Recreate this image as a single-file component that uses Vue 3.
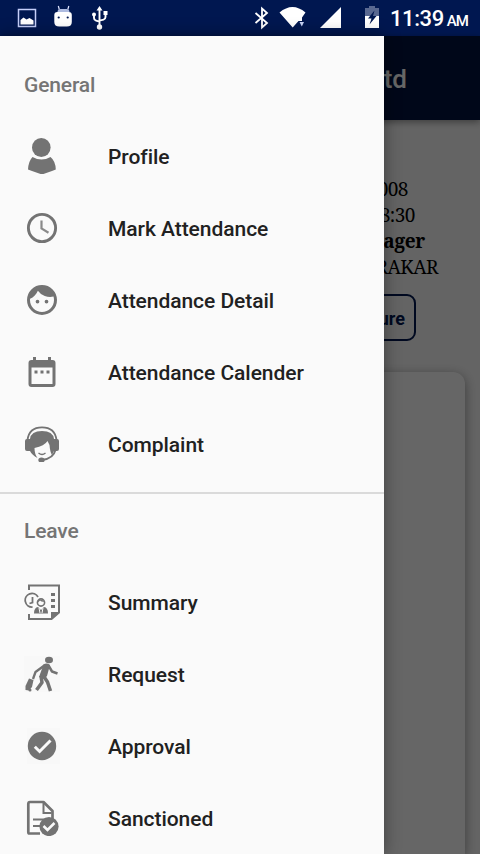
<script setup>
const sections = [
  {
    title: 'General',
    items: [
      { label: 'Profile', icon: 'profile' },
      { label: 'Mark Attendance', icon: 'clock' },
      { label: 'Attendance Detail', icon: 'face' },
      { label: 'Attendance Calender', icon: 'calendar' },
      { label: 'Complaint', icon: 'support' },
    ],
  },
  {
    title: 'Leave',
    items: [
      { label: 'Summary', icon: 'summary' },
      { label: 'Request', icon: 'request' },
      { label: 'Approval', icon: 'approval' },
      { label: 'Sanctioned', icon: 'sanctioned' },
    ],
  },
]
</script>

<template>
  <div class="screen">
    <header class="status">
      <svg class="status-icons" width="120" height="36" viewBox="0 0 120 36">
        <rect x="18.5" y="9.5" width="17" height="17" fill="none" stroke="#c5cffa" stroke-width="1.5" />
        <path d="M20.5 24.500V20l3-2.500 3 2 3-1.500 4 2.500v4z" fill="#fff" />
        <path d="M58.300 6l1 3.500M68.800 6l-1 3.500" stroke="#dfe5ff" stroke-width="1.200" />
        <path d="M57.500 12q0-3 3-3h6q3 0 3 3z" fill="#aebbe0" />
        <path d="M54.300 15q0-3 3-3h11.500q3 0 3 3v7q0 4.500-5 4.500h-7.500q-5 0-5-4.500z" fill="#fff" />
        <circle cx="58.700" cy="17.500" r="1.100" fill="#001750" /><circle cx="67.700" cy="17.500" r="1.100" fill="#001750" />
        <g fill="none" stroke="#fff" stroke-width="1.900"><path d="M99.500 9v17M94 15v3q0 2 2 2.600l3.500 1M105.500 14v3q0 2-2 2.600l-4 1" /></g>
        <path d="M99.500 6l3 4.500h-6zM103.500 11h4v4h-4z" fill="#fff" /><circle cx="94" cy="14.500" r="2" fill="#fff" /><circle cx="99.500" cy="27" r="2.700" fill="#fff" />
      </svg>
      <div class="status-right">
        <svg width="130" height="36" viewBox="250 0 130 36">
          <path d="M255.500 13l11.500 10-5 4.500V8.500l5 4.500-11.500 10" fill="none" stroke="#fff" stroke-width="1.800" />
          <path d="M279.500 12.500Q292.500 1.500 305.500 12.500L302 17.500V21h-3.500L292.700 27.500z" fill="#fff" />
          <path d="M299.500 22h4.500l-2.200 4.500z" fill="#c6d3f5" />
          <path d="M341 7v21h-21z" fill="#fff" />
          <path d="M369 6h6v2h4v9h-14V8h4z" fill="#596890" /><path d="M365 16h14v12h-14z" fill="#fff" />
          <path d="M374.500 10.500l-6.500 8h3.500l-2 6 7-8.500h-3.500z" fill="#001750" />
        </svg>
        <span class="time">11:39</span><span class="ampm">AM</span>
      </div>
    </header>

    <div class="body">
      <main class="page">
        <div class="toolbar">Ltd</div>
        <div class="details">
          <div class="line id">008</div>
          <div class="line hours">8:30</div>
          <div class="line role">nager</div>
          <div class="line name">RAKAR</div>
        </div>
        <div class="button">ure</div>
        <div class="card"></div>
      </main>
      <div class="scrim"></div>

      <nav class="drawer">
        <section v-for="section in sections" :key="section.title" class="section">
          <h2>{{ section.title }}</h2>
          <div v-for="item in section.items" :key="item.label" class="item">
            <svg class="icon" viewBox="0 0 36 36" fill="#737373">
              <template v-if="item.icon === 'profile'">
                <ellipse cx="17.300" cy="9.500" rx="9.300" ry="9.500" />
                <path d="M8.500 19Q17.500 24 26.500 19Q31.500 23 31.800 31.500L28 33 18 36.500 8 33 4 31.500Q4.500 23 8.500 19z" />
              </template>
              <template v-else-if="item.icon === 'clock'">
                <circle cx="18" cy="18" r="13.600" fill="none" stroke="#737373" stroke-width="2.900" />
                <path d="M17.500 10.500v8l7 4.200" fill="none" stroke="#8a8a8a" stroke-width="2.200" />
              </template>
              <g v-else-if="item.icon === 'face'" transform="scale(1.5)">
                <path d="M9 11.750a1.250 1.250 0 1 0 0 2.500 1.250 1.250 0 0 0 0-2.500zm6 0a1.250 1.250 0 1 0 0 2.500 1.250 1.250 0 0 0 0-2.500zM12 2a10 10 0 1 0 0 20 10 10 0 0 0 0-20zm0 18c-4.410 0-8-3.590-8-8 0-.290.020-.580.050-.860 2.360-1.050 4.230-2.980 5.210-5.370a9.974 9.974 0 0 0 10.410 3.970c.210.710.330 1.470.330 2.260 0 4.410-3.590 8-8 8z" />
              </g>
              <g v-else-if="item.icon === 'calendar'" transform="scale(1.5)">
                <path fill-rule="evenodd" d="M19 4h-1V2h-2v2H8V2H6v2H5a2 2 0 0 0-1.990 2L3 20a2 2 0 0 0 2 2h14a2 2 0 0 0 2-2V6a2 2 0 0 0-2-2zm0 16H5V9h14v11z" />
                <path d="M7 11h2v2H7zm4 0h2v2h-2zm4 0h2v2h-2z" />
              </g>
              <template v-else-if="item.icon === 'support'">
                <path d="M3.500 14Q5 1.300 18 1.300T32.500 14" fill="none" stroke="#737373" stroke-width="1.800" />
                <path d="M3 13h3q1-8 12-8t12 8h3q2 0 2 2v8q0 2-2 2h-3l-2 4q-2-3-2.500-10l-2-4q-3 5-13 7 0 6 3 10Q8 29 6 25H3q-2 0-2-2v-8q0-2 2-2z" />
                <path d="M14.500 27q3.500 3 7 0" fill="none" stroke="#737373" stroke-width="1.300" />
                <path d="M31.500 24q-2 8.500-13.500 10" fill="none" stroke="#737373" stroke-width="1.800" /><ellipse cx="17.500" cy="34" rx="3.200" ry="2.500" />
              </template>
              <template v-else-if="item.icon === 'summary'">
                <path d="M5 6V1.500h30v27L27.500 35H5v-5" fill="none" stroke="#737373" stroke-width="2" />
                <path d="M27 36v-8h9zM27 9h4v3h-4zm0 6h4v3h-4zm0 6h4v3h-4z" />
                <path d="M8.500 23A6.800 6.800 0 1 1 14 13M8.500 13v5.500l-3 1" fill="none" stroke="#737373" stroke-width="1.800" />
                <circle cx="17" cy="18.500" r="3.600" fill="none" stroke="#737373" stroke-width="1.600" />
                <path d="M13 17.500q2-4 8 0-3 1-5-1l-3 3zM10 29.500q0-6 4-6.500l3 3 3-3q4 .500 4 6.500z" />
                <path d="M15 24l1 5M19 24l-1 5" stroke="#fafafa" />
              </template>
              <template v-else-if="item.icon === 'request'">
                <rect width="36" height="36" fill="#f8f8f8" />
                <ellipse cx="25" cy="4" rx="4" ry="3.300" />
                <path d="M19.500 8.500Q23 6.500 26 9l-3 11-3 3-5-2z" />
                <g fill="none" stroke="#737373" stroke-linejoin="round">
                  <path d="M21 9l-9.500 7-2.500 7" stroke-width="2.300" />
                  <path d="M24.500 9.500l3.500 6 5.500 2" stroke-width="2.500" />
                  <path d="M19.500 20l4 6 3 9" stroke-width="3.500" />
                  <path d="M17 20l1 6.500-5.500 7.500" stroke-width="3.500" />
                </g>
                <path d="M5 22.500l4.500 1.500-1.500 7-3 3.500-3.500-.500v-4z" /><circle cx="6" cy="34" r="1.500" />
              </template>
              <template v-else-if="item.icon === 'approval'">
                <rect x="3" width="33" height="36" fill="#f8f8f8" />
                <circle cx="18" cy="18" r="14.200" />
                <path d="M10.800 18.800l4.800 4.700L26.500 12.500" fill="none" stroke="#fafafa" stroke-width="3" />
              </template>
              <template v-else>
                <path d="M16 33.500H5.500Q4.300 33.500 4.300 32V4Q4.300 2 6 2h13.500l9 9v8" fill="none" stroke="#737373" stroke-width="2.700" stroke-linejoin="round" />
                <path d="M19.500 3v10h8" fill="none" stroke="#737373" stroke-width="2" />
                <path d="M9 19.500h14M9 26h8" stroke="#737373" stroke-width="2" />
                <circle cx="25" cy="26.500" r="9.600" />
                <path d="M19.500 26l4 4 7-7" fill="none" stroke="#fafafa" stroke-width="2.500" />
              </template>
            </svg>
            <span>{{ item.label }}</span>
          </div>
        </section>
      </nav>
    </div>
  </div>
</template>

<style>
body { overflow: hidden; }
</style>

<style scoped>
.screen {
  width: 480px;
  height: 854px;
  overflow: hidden;
  display: flex;
  flex-direction: column;
  font-family: Roboto, "Liberation Sans", sans-serif;
}
.status {
  height: 36px;
  flex: none;
  display: flex;
  justify-content: space-between;
  background: #001750;
  color: #fff;
}
.status svg { display: block; }
.status-right {
  display: flex;
  align-items: baseline;
  width: 230px;
}
.status-right svg { align-self: flex-start; flex: none; }
.time { font-size: 22px; line-height: 38px; font-weight: 500; margin-left: 10px; letter-spacing: -0.4px; }
.ampm { font-size: 15px; margin-left: 3px; font-weight: 500; letter-spacing: -0.9px; }
.body { position: relative; flex: 1; min-height: 0; }
.page {
  height: 100%;
  display: flex;
  flex-direction: column;
  align-items: flex-end;
  background: #fafafa;
}
.toolbar {
  width: 100%;
  height: 84px;
  flex: none;
  box-sizing: border-box;
  padding-right: 73px;
  text-align: right;
  line-height: 86px;
  font-size: 26px;
  font-weight: 500;
  color: #fff;
  background: #001340;
  box-shadow: 0 2px 7px rgba(0, 0, 0, 0.4);
}
.details {
  padding-top: 56px;
  display: flex;
  flex-direction: column;
  align-items: flex-end;
  color: #000;
  font-family: "Noto Serif", "Liberation Serif", serif;
  font-size: 19px;
  line-height: 26px;
  letter-spacing: -0.5px;
}
.id { margin-right: 72px; }
.hours { margin-right: 65px; }
.role { margin-right: 55px; font-weight: 700; line-height: 27px; letter-spacing: -0.3px; }
.name { margin-right: 42px; line-height: 25px; }
.button {
  box-sizing: border-box;
  width: 120px;
  height: 47px;
  margin: 14px 64px 0 0;
  padding-right: 9px;
  border: 2px solid #001750;
  border-radius: 9px;
  line-height: 46px;
  text-align: right;
  font-size: 18px;
  font-weight: 700;
  color: #001750;
}
.card {
  width: 450px;
  flex: 1;
  margin: 31px 15px 0 0;
  border-radius: 12px 12px 0 0;
  background: #fff;
  box-shadow: 0 3px 12px rgba(0, 0, 0, 0.4);
}
.scrim {
  position: absolute;
  inset: 0;
  background: rgba(0, 0, 0, 0.6);
}
.drawer {
  position: absolute;
  top: 0;
  left: 0;
  bottom: 0;
  width: 384px;
  box-sizing: border-box;
  padding-top: 13px;
  overflow: hidden;
  background: #fafafa;
  box-shadow: 0 0 16px rgba(0, 0, 0, 0.4);
}
.section + .section {
  margin-top: 11px;
  border-top: 2px solid #dadada;
  padding-top: 1px;
}
h2 {
  margin: 0;
  padding-left: 24px;
  font-size: 21px;
  line-height: 72px;
  font-weight: 500;
  letter-spacing: -0.15px;
  color: #757575;
}
.item {
  height: 72px;
  display: flex;
  align-items: center;
  gap: 48px;
  padding-left: 24px;
  font-size: 21px;
  font-weight: 500;
  letter-spacing: -0.05px;
  color: #212121;
}
.icon { width: 36px; height: 36px; flex: none; margin-bottom: 2px; }
</style>
